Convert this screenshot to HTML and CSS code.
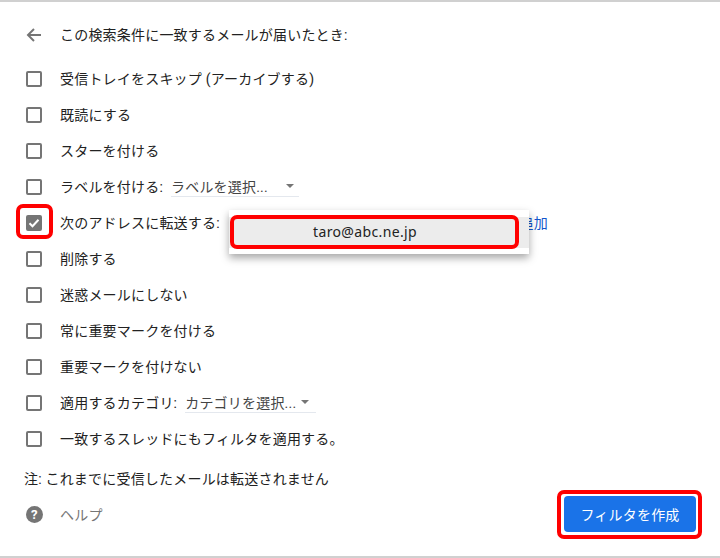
FILE: index.html
```html
<!DOCTYPE html>
<html lang="ja">
<head>
  <meta charset="UTF-8">
  <title>フィルタを作成</title>
  <link rel="stylesheet" href="styles.css">
</head>
<body>
  <div class="dialog">
    <div class="title-row">
      <svg class="back" width="16" height="16" viewBox="0 0 16 16"><path d="M15 7H4.4l4.3-4.3L7.3 1.3 0.6 8l6.7 6.7 1.4-1.4L4.4 9H15z" fill="#757575"/></svg>
      <span>この検索条件に一致するメールが届いたとき:</span>
    </div>

    <div class="options">
      <div class="row"><span class="check"></span><span>受信トレイをスキップ (アーカイブする)</span></div>
      <div class="row"><span class="check"></span><span>既読にする</span></div>
      <div class="row"><span class="check"></span><span>スターを付ける</span></div>
      <div class="row">
        <span class="check"></span><span>ラベルを付ける:</span>
        <span class="select label-select"><span>ラベルを選択...</span><i class="caret"></i></span>
      </div>
      <div class="row forward-row">
        <span class="check checked">
          <svg width="12" height="12" viewBox="0 0 12 12"><path d="M1.5 6.3l3 3 6-6.5" fill="none" stroke="#fff" stroke-width="2"/></svg>
        </span>
        <span>次のアドレスに転送する:</span>
        <a class="add-link" href="#">追加</a>
      </div>
      <div class="row"><span class="check"></span><span>削除する</span></div>
      <div class="row"><span class="check"></span><span>迷惑メールにしない</span></div>
      <div class="row"><span class="check"></span><span>常に重要マークを付ける</span></div>
      <div class="row"><span class="check"></span><span>重要マークを付けない</span></div>
      <div class="row">
        <span class="check"></span><span>適用するカテゴリ:</span>
        <span class="select category-select"><span>カテゴリを選択...</span><i class="caret"></i></span>
      </div>
      <div class="row"><span class="check"></span><span>一致するスレッドにもフィルタを適用する。</span></div>
    </div>

    <p class="note">注: これまでに受信したメールは転送されません</p>

    <div class="footer">
      <div class="help">
        <svg width="17" height="17" viewBox="0 0 18 18"><circle cx="9" cy="9" r="9" fill="#757575"/><text x="9" y="14" text-anchor="middle" class="help-mark">?</text></svg>
        <span>ヘルプ</span>
      </div>
      <button class="create">フィルタを作成</button>
    </div>

    <!-- popup and red annotations lie over the form -->
    <div class="popup"><div class="popup-item">taro@abc.ne.jp</div></div>
    <div class="mark mark-check"></div>
    <div class="mark mark-item"></div>
    <div class="mark mark-button"></div>
  </div>
</body>
</html>
```

FILE: styles.css
```css
* {
  box-sizing: border-box;
}

body {
  margin: 0;
  background-color: #fff;
  color: #222;
  font-family: "Roboto", "Noto Sans CJK JP", sans-serif;
  font-size: 14px;
  letter-spacing: 0.2px;
}

.dialog {
  position: relative;
  width: 720px;
  height: 558px;
  padding: 17px 0 0 26px;
  border-top: 2px solid #d0d0d0;
  border-bottom: 2px solid #d0d0d0;
  overflow: hidden;
}

.title-row {
  display: flex;
  align-items: center;
  height: 32px;
  margin-bottom: 10px;
  padding-bottom: 2px;
}

.back {
  margin-top: 2px;
  margin-right: 18px;
}

.row {
  display: flex;
  align-items: center;
  height: 36px;
  padding-bottom: 2px;
}

.check {
  display: flex;
  align-items: center;
  justify-content: center;
  flex: none;
  width: 16px;
  height: 16px;
  margin-top: 2px;
  margin-right: 18px;
  border: 2px solid #757575;
  border-radius: 2px;
}

.check.checked {
  background-color: #757575;
}

.select {
  display: flex;
  align-items: center;
  justify-content: space-between;
  height: 22px;
  margin-left: 8px;
  border-bottom: 1px solid #e4e8ee;
  color: #444;
}

.label-select {
  width: 128px;
  padding-right: 5px;
}

.category-select {
  width: 131px;
  padding-right: 7px;
}

.caret {
  width: 0;
  height: 0;
  border-left: 4px solid transparent;
  border-right: 4px solid transparent;
  border-top: 4px solid #757575;
}

.add-link {
  margin-left: auto;
  margin-right: 172px;
  color: #1155cc;
  text-decoration: none;
}

.note {
  margin: 12px 0 0 -2px;
  line-height: 20px;
}

.footer {
  display: flex;
  align-items: center;
  justify-content: space-between;
  margin-top: 7px;
  padding-right: 24px;
}

.help {
  display: flex;
  align-items: center;
  color: #757575;
}

.help svg {
  margin-right: 17px;
}

.help-mark {
  fill: #fff;
  font-size: 14px;
  font-weight: 700;
}

.create {
  width: 132px;
  height: 36px;
  border: none;
  border-radius: 4px;
  background-color: #1a73e8;
  color: #fff;
  font-family: inherit;
  font-size: 14px;
  letter-spacing: inherit;
}

.popup {
  position: absolute;
  left: 229px;
  top: 208px;
  width: 300px;
  height: 44px;
  padding-top: 7px;
  background-color: #fff;
  box-shadow: 0 4px 8px rgba(0, 0, 0, 0.35);
}

.popup-item {
  height: 31px;
  padding-right: 28px;
  background-color: #ececec;
  color: #222;
  font-family: "Noto Sans", sans-serif;
  letter-spacing: 0.35px;
  line-height: 30px;
  text-align: center;
}

.mark {
  position: absolute;
  border: 4px solid #f00;
  border-radius: 7px;
}

.mark-check {
  left: 16px;
  top: 202px;
  width: 37px;
  height: 35px;
}

.mark-item {
  left: 230px;
  top: 213px;
  width: 289px;
  height: 34px;
}

.mark-button {
  left: 557px;
  top: 488px;
  width: 145px;
  height: 49px;
}
```
